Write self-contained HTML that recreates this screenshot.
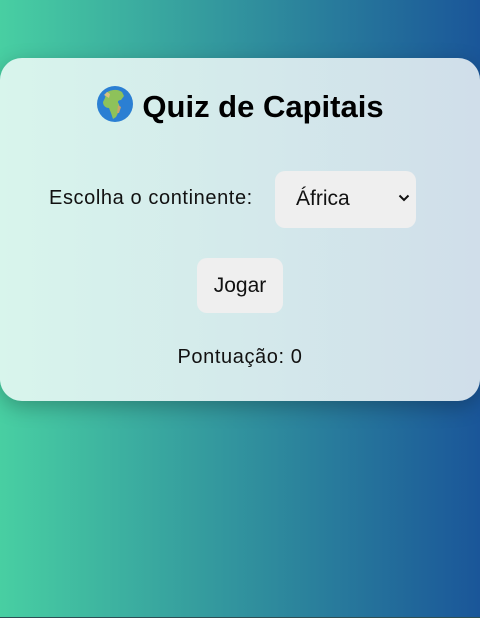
<!DOCTYPE html>
<html><head><meta charset="utf-8"><style>
html,body{margin:0;padding:0;width:480px;height:618px;overflow:hidden}
body{background:linear-gradient(90deg,#48cfa2,#1a5699);font-family:"Liberation Sans",sans-serif;position:relative}
.bar{position:absolute;left:0;right:0;bottom:0;height:1px;background:#2d4f55}
.card{position:absolute;left:0;top:58px;width:480px;height:343px;border-radius:22px;background:linear-gradient(90deg,#d8f5ec,#d0deea);box-shadow:0 6px 20px rgba(0,0,0,.25)}
h1{position:absolute;left:0;right:0;top:85px;margin:0;text-align:center;font-size:31px;font-weight:bold;color:#000;line-height:36px}
h1 svg{vertical-align:-6px;margin-right:8px}
.lbl{position:absolute;left:49px;top:187px;font-size:20px;color:#111;letter-spacing:0.6px;white-space:nowrap}
.sel{position:absolute;left:275px;top:171px;width:141px;height:57px;background:#efefef;border-radius:10px}
.sel span{position:absolute;left:21px;top:16px;font-size:21px;color:#111}
.sel svg{position:absolute;right:6px;top:23px}
.btn{position:absolute;left:197px;top:258px;width:86px;height:55px;background:#efefef;border-radius:10px;text-align:center;line-height:55px;font-size:21px;color:#111}
.score{position:absolute;left:0;right:0;top:346px;text-align:center;font-size:20px;color:#111;letter-spacing:0.6px}
</style></head><body>
<div class="card">
</div>
<h1><svg width="38" height="38" viewBox="0 0 38 38"><circle cx="19" cy="19" r="18" fill="#2b7fd3"/><path d="M10 8c5-4 12-4 16-1l2 4-3 4c-3 0-4 2-2 4l1 5-4 8-3 2-2-6-2-5c-4 0-6-3-6-6l2-4z" fill="#8ec25a"/><path d="M22 20l3 2-2 6-2 0z" fill="#c9a56a"/><path d="M8 10l3-3 3 2-1 4z" fill="#d9c080"/></svg>Quiz de Capitais</h1>
<div class="lbl">Escolha o continente:</div>
<div class="sel"><span>África</span><svg width="12" height="8" viewBox="0 0 12 8"><path d="M1.5 1.5l4.5 4.5 4.5-4.5" stroke="#111" stroke-width="2" fill="none"/></svg></div>
<div class="btn">Jogar</div>
<div class="score">Pontuação: 0</div>
<div class="bar"></div>
</body></html>
